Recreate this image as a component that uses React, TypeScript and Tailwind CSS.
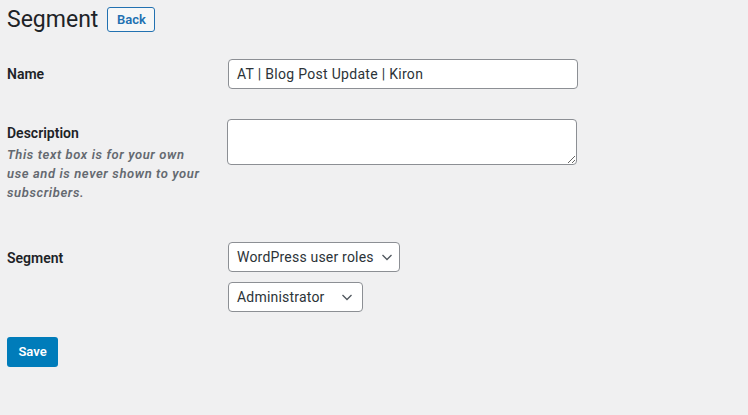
import React from "react";

const Chevron = () => (
  <svg width="14" height="14" viewBox="0 0 14 14" fill="none" className="shrink-0">
    <path d="M2.5 5l4.5 4.5L11.5 5" stroke="#50575e" strokeWidth="1.3" />
  </svg>
);

const SelectBox = ({ label, width }: { label: string; width: string }) => (
  <div
    className={`${width} h-[30px] flex items-center justify-between gap-[6px] pl-[8px] pr-[8px] bg-white border border-[#8c8f94] rounded-[4px] text-[14px] text-[#2c3338] whitespace-nowrap tracking-[0.2px]`}
  >
    <span>{label}</span>
    <Chevron />
  </div>
);

const App = () => {
  return (
    <div className="min-h-screen bg-[#f0f0f1] pl-[7px] pt-[7px] text-[#1d2327] font-['Roboto',sans-serif]">
      <div className="flex items-center h-[25px]">
        <h1 className="text-[23px] font-normal leading-none text-[#1d2327]">Segment</h1>
        <button className="ml-[9px] h-[25px] w-[48px] border border-[#2271b1] rounded-[3px] bg-[#f6f7f7] text-[13px] font-semibold text-[#2271b1]">
          Back
        </button>
      </div>

      {/* Name */}
      <div className="flex items-center mt-[27px]">
        <label className="w-[221px] text-[14px] font-semibold">Name</label>
        <div className="w-[350px] h-[30px] flex items-center px-[8px] bg-white border border-[#8c8f94] rounded-[4px] text-[14px] text-[#2c3338] tracking-[0.3px]">
          AT | Blog Post Update | Kiron
        </div>
      </div>

      {/* Description */}
      <div className="flex mt-[30px]">
        <div className="w-[220px] pt-[5px]">
          <div className="text-[14px] font-semibold leading-[18px]">Description</div>
          <p className="mt-[3px] text-[13px] italic font-semibold leading-[19px] text-[#646970] tracking-[0.6px] whitespace-nowrap">
            This text box is for your own
            <br />
            use and is never shown to your
            <br />
            subscribers.
          </p>
        </div>
        <textarea className="w-[350px] h-[46px] bg-white border border-[#8c8f94] rounded-[4px]" />
      </div>

      {/* Segment */}
      <div className="flex mt-[40px]">
        <label className="w-[221px] text-[14px] font-semibold pt-[6px]">Segment</label>
        <div className="flex flex-col gap-[10px]">
          <SelectBox label="WordPress user roles" width="w-[172px]" />
          <SelectBox label="Administrator" width="w-[135px]" />
        </div>
      </div>

      <button className="mt-[25px] w-[51px] h-[30px] rounded-[3px] bg-[#007cba] text-white text-[13px] font-semibold">
        Save
      </button>
    </div>
  );
};

export default App;
